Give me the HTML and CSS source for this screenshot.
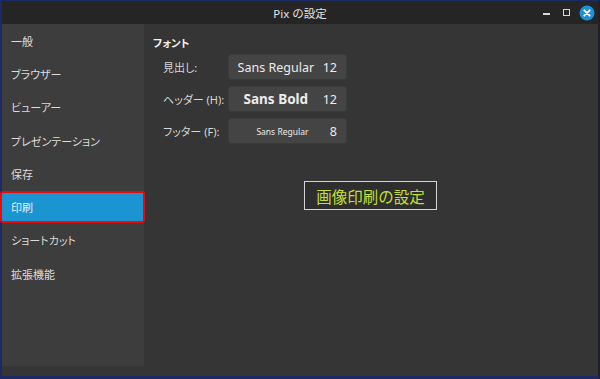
FILE: index.html
```html
<!DOCTYPE html>
<html>

<head>
  <meta charset="UTF-8">
  <meta name="viewport" content="width=device-width, initial-scale=1.0">
  <title>Pix の設定</title>
  <link rel="stylesheet" href="styles.css">
</head>

<body>
  <div class="window">
    <div class="titlebar">
      <div class="title">Pix の設定</div>
      <div class="controls">
        <span class="ctl ctl-min"></span>
        <span class="ctl ctl-max"></span>
        <svg class="ctl-close" viewBox="0 0 16 16" width="16" height="16">
          <circle cx="8" cy="8" r="7.5" fill="#1e90d8" />
          <path d="M5.3 5.3 L10.7 10.7 M10.7 5.3 L5.3 10.7" stroke="#fff" stroke-width="1.8" stroke-linecap="round" />
        </svg>
      </div>
    </div>

    <div class="main">
      <ul class="sidebar">
        <li class="item">一般</li>
        <li class="item">ブラウザー</li>
        <li class="item">ビューアー</li>
        <li class="item">プレゼンテーション</li>
        <li class="item">保存</li>
        <li class="item active">印刷</li>
        <li class="item">ショートカット</li>
        <li class="item">拡張機能</li>
      </ul>

      <div class="content">
        <div class="heading">フォント</div>
        <div class="fonts">
          <div class="label">見出し:</div>
          <div class="font-btn">
            <span class="font-name">Sans Regular</span>
            <span class="font-size">12</span>
          </div>
          <div class="label">ヘッダー (H):</div>
          <div class="font-btn">
            <span class="font-name bold">Sans Bold</span>
            <span class="font-size">12</span>
          </div>
          <div class="label">フッター (F):</div>
          <div class="font-btn">
            <span class="font-name small">Sans Regular</span>
            <span class="font-size">8</span>
          </div>
        </div>

        <div class="note">画像印刷の設定</div>
      </div>
    </div>
  </div>
</body>

</html>
```

FILE: styles.css
```css
* {
  box-sizing: border-box;
}

body {
  margin: 0;
  background: #1b2a63;
  font-family: "Noto Sans", "Noto Sans CJK JP", sans-serif;
}

.window {
  display: flex;
  flex-direction: column;
  width: 600px;
  height: 379px;
  border-top: 1px solid #1b2a63;
  border-left: 2px solid #1b2a63;
  border-right: 2px solid #1e1f2a;
  border-bottom: 3px solid #1b2a63;
  background: #353535;
}

.titlebar {
  position: relative;
  display: flex;
  align-items: center;
  justify-content: center;
  height: 23px;
  background: #252525;
  color: #e2e2e2;
  font-size: 11.5px;
}

.controls {
  position: absolute;
  top: 0;
  right: 3px;
  bottom: 0;
  display: flex;
  align-items: center;
  gap: 13px;
}

.ctl {
  display: block;
}

.ctl-min {
  width: 7px;
  height: 1.5px;
  margin-top: 3px;
  background: #d8d8d8;
}

.ctl-max {
  width: 7px;
  height: 7px;
  border: 1.5px solid #d8d8d8;
}

.ctl-close {
  display: block;
  margin-left: -4px;
}

.main {
  display: flex;
  flex: 1;
  padding-bottom: 10px;
}

.sidebar {
  width: 142px;
  margin: 0;
  padding: 0;
  list-style: none;
  background: #3d3d3d;
}

.item {
  display: flex;
  align-items: center;
  height: 33.3px;
  padding-left: 9px;
  color: #dcdcdc;
  font-size: 11px;
  font-feature-settings: "palt";
}

.item.active {
  height: 32px;
  margin: 0.7px -1px 0.6px -2px;
  padding-left: 9px;
  border: 2px solid #ea0a0a;
  border-radius: 3px;
  background: #1a95d2;
  color: #e6f2fa;
}

.content {
  position: relative;
  flex: 1;
  padding: 12px 0 0 9px;
}

.heading {
  height: 14px;
  color: #f0f0f0;
  font-size: 10.5px;
  font-weight: bold;
  line-height: 14px;
  font-feature-settings: "palt";
}

.fonts {
  display: grid;
  grid-template-columns: 75px 119px;
  row-gap: 6px;
  margin-top: 4px;
  align-items: center;
}

.label {
  padding-left: 10px;
  color: #d8d8d8;
  font-size: 11px;
  white-space: nowrap;
  font-feature-settings: "palt";
}

.font-btn {
  display: flex;
  align-items: center;
  height: 26px;
  padding-right: 9px;
  border: 1px solid #3b3b3b;
  border-radius: 3px;
  background: #444;
  color: #ececec;
}

.font-name {
  flex: 1;
  text-align: center;
  font-size: 12.5px;
}

.font-name.bold {
  font-weight: bold;
  font-size: 13.5px;
}

.font-name.small {
  font-size: 8.5px;
  padding-left: 6px;
}

.font-size {
  font-size: 12.5px;
}

.note {
  position: absolute;
  left: 160px;
  top: 157px;
  width: 133px;
  height: 29px;
  display: flex;
  align-items: center;
  justify-content: center;
  border: 1px solid #d4d4d4;
  background: #2e2e2e;
  color: #c3df35;
  font-family: "Noto Sans CJK JP", sans-serif;
  font-size: 15.5px;
}
```
